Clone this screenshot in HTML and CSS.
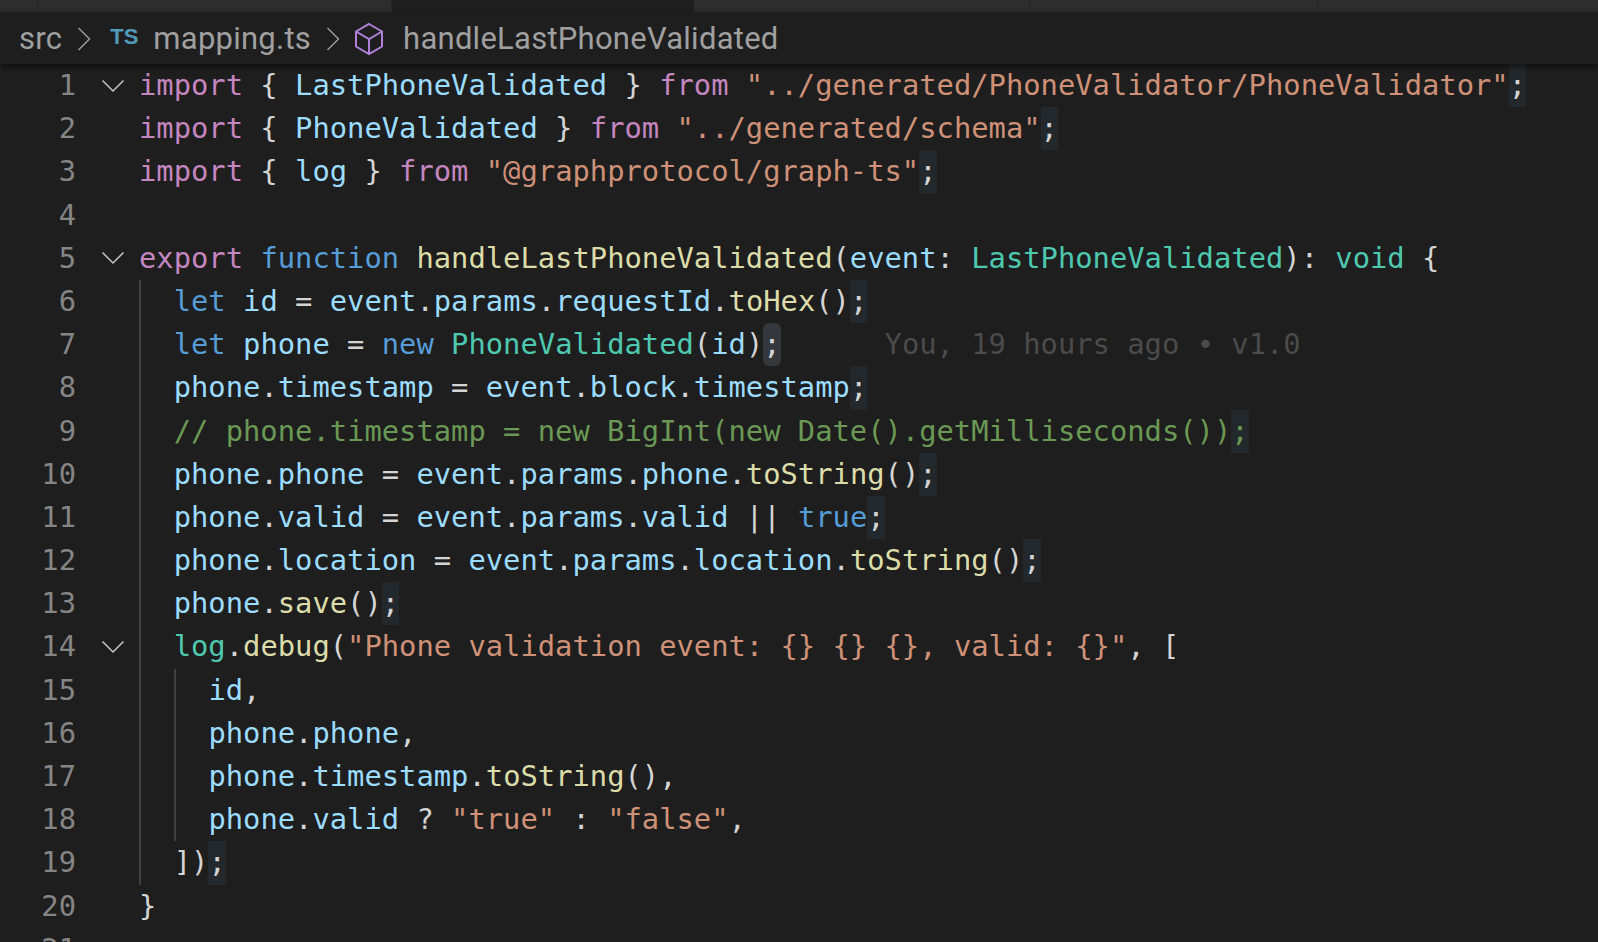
FILE: index.html
```html
<!DOCTYPE html>
<html lang="en">
<head>
<meta charset="utf-8">
<title>mapping.ts</title>
<link rel="stylesheet" href="styles.css">
</head>
<body>
<div class="tabs">
  <div class="tab t0"></div><div class="tab t1"></div><div class="tab active"></div><div class="tab t3"></div><div class="tab t4"></div><div class="tab t5"></div>
</div>
<nav class="crumbs">
  <span>src</span>
  <svg class="sep" width="14" height="26" viewBox="0 0 14 26"><path d="M1.500 2l11 11L1.500 24" fill="none" stroke="#a0a0a0" stroke-width="1.400"/></svg>
  <span class="ts">TS</span>
  <span>mapping.ts</span>
  <svg class="sep" width="14" height="26" viewBox="0 0 14 26"><path d="M1.500 2l11 11L1.500 24" fill="none" stroke="#a0a0a0" stroke-width="1.400"/></svg>
  <svg class="cube" width="30" height="34" viewBox="0 0 30 34"><path d="M15 2 L28 9.500 V24.500 L15 32 L2 24.500 V9.500 Z M2 9.500 L15 17 L28 9.500 M15 17 V32" fill="none" stroke="#b180d7" stroke-width="2"/></svg>
  <span>handleLastPhoneValidated</span>
</nav>
<main class="editor">
  <div class="line"><span class="num">1</span><span class="fold"><svg width="24" height="14" viewBox="0 0 24 14"><path d="M1.500 1.500L12 12L22.500 1.500" fill="none" stroke="#c5c5c5" stroke-width="1.500"/></svg></span><code><i class="k">import</i> { <i class="v">LastPhoneValidated</i> } <i class="k">from</i> <i class="s">"../generated/PhoneValidator/PhoneValidator"</i><b>;</b></code></div>
  <div class="line"><span class="num">2</span><span class="fold"></span><code><i class="k">import</i> { <i class="v">PhoneValidated</i> } <i class="k">from</i> <i class="s">"../generated/schema"</i><b>;</b></code></div>
  <div class="line"><span class="num">3</span><span class="fold"></span><code><i class="k">import</i> { <i class="v">log</i> } <i class="k">from</i> <i class="s">"@graphprotocol/graph-ts"</i><b>;</b></code></div>
  <div class="line"><span class="num">4</span><span class="fold"></span><code></code></div>
  <div class="line"><span class="num">5</span><span class="fold"><svg width="24" height="14" viewBox="0 0 24 14"><path d="M1.500 1.500L12 12L22.500 1.500" fill="none" stroke="#c5c5c5" stroke-width="1.500"/></svg></span><code><i class="k">export</i> <i class="b">function</i> <i class="f">handleLastPhoneValidated</i>(<i class="v">event</i>: <i class="t">LastPhoneValidated</i>): <i class="t">void</i> {</code></div>
  <div class="line"><span class="num">6</span><span class="fold"></span><code><span class="ind"></span><i class="b">let</i> <i class="v">id</i> = <i class="v">event</i>.<i class="v">params</i>.<i class="v">requestId</i>.<i class="f">toHex</i>()<b>;</b></code></div>
  <div class="line"><span class="num">7</span><span class="fold"></span><code><span class="ind"></span><i class="b">let</i> <i class="v">phone</i> = <i class="b">new</i> <i class="t">PhoneValidated</i>(<i class="v">id</i>)<b class="cursor">;</b><span class="blame">You, 19 hours ago • v1.0</span></code></div>
  <div class="line"><span class="num">8</span><span class="fold"></span><code><span class="ind"></span><i class="v">phone</i>.<i class="v">timestamp</i> = <i class="v">event</i>.<i class="v">block</i>.<i class="v">timestamp</i><b>;</b></code></div>
  <div class="line"><span class="num">9</span><span class="fold"></span><code><span class="ind"></span><i class="c">// phone.timestamp = new BigInt(new Date().getMilliseconds())</i><b class="c">;</b></code></div>
  <div class="line"><span class="num">10</span><span class="fold"></span><code><span class="ind"></span><i class="v">phone</i>.<i class="v">phone</i> = <i class="v">event</i>.<i class="v">params</i>.<i class="v">phone</i>.<i class="f">toString</i>()<b>;</b></code></div>
  <div class="line"><span class="num">11</span><span class="fold"></span><code><span class="ind"></span><i class="v">phone</i>.<i class="v">valid</i> = <i class="v">event</i>.<i class="v">params</i>.<i class="v">valid</i> || <i class="b">true</i><b>;</b></code></div>
  <div class="line"><span class="num">12</span><span class="fold"></span><code><span class="ind"></span><i class="v">phone</i>.<i class="v">location</i> = <i class="v">event</i>.<i class="v">params</i>.<i class="v">location</i>.<i class="f">toString</i>()<b>;</b></code></div>
  <div class="line"><span class="num">13</span><span class="fold"></span><code><span class="ind"></span><i class="v">phone</i>.<i class="f">save</i>()<b>;</b></code></div>
  <div class="line"><span class="num">14</span><span class="fold"><svg width="24" height="14" viewBox="0 0 24 14"><path d="M1.500 1.500L12 12L22.500 1.500" fill="none" stroke="#c5c5c5" stroke-width="1.500"/></svg></span><code><span class="ind"></span><i class="t">log</i>.<i class="f">debug</i>(<i class="s">"Phone validation event: {} {} {}, valid: {}"</i>, [</code></div>
  <div class="line"><span class="num">15</span><span class="fold"></span><code><span class="ind"></span><span class="ind"></span><i class="v">id</i>,</code></div>
  <div class="line"><span class="num">16</span><span class="fold"></span><code><span class="ind"></span><span class="ind"></span><i class="v">phone</i>.<i class="v">phone</i>,</code></div>
  <div class="line"><span class="num">17</span><span class="fold"></span><code><span class="ind"></span><span class="ind"></span><i class="v">phone</i>.<i class="v">timestamp</i>.<i class="f">toString</i>(),</code></div>
  <div class="line"><span class="num">18</span><span class="fold"></span><code><span class="ind"></span><span class="ind"></span><i class="v">phone</i>.<i class="v">valid</i> ? <i class="s">"true"</i> : <i class="s">"false"</i>,</code></div>
  <div class="line"><span class="num">19</span><span class="fold"></span><code><span class="ind"></span>])<b>;</b></code></div>
  <div class="line"><span class="num">20</span><span class="fold"></span><code>}</code></div>
  <div class="line"><span class="num">21</span><span class="fold"></span><code></code></div>
</main>
</body>
</html>
```
FILE: styles.css
```css
* { box-sizing: border-box; }
html, body { margin: 0; height: 100%; }
body {
  width: 1598px;
  height: 942px;
  overflow: hidden;
  background: #1e1e1e;
  display: flex;
  flex-direction: column;
}
.tabs {
  height: 12px;
  flex: none;
  display: flex;
  background: #252526;
}
.tab { background: #2d2d2d; border-right: 1px solid #252526; }
.t0 { width: 38px; }
.t1 { width: 354px; }
.tab.active { width: 302px; background: #1e1e1e; border: 0; }
.t3 { width: 336px; }
.t4 { width: 288px; }
.t5 { flex: 1; border: 0; }
.crumbs {
  height: 52px;
  flex: none;
  display: flex;
  align-items: center;
  padding: 1px 0 0 19px;
  font-family: Roboto, "Liberation Sans", sans-serif;
  font-size: 31px;
  letter-spacing: 0.25px;
  color: #a0a0a0;
  background: #1e1e1e;
  box-shadow: 0 3px 6px rgba(0, 0, 0, 0.5);
  position: relative;
}
.sep { margin: 0 19px 0 15px; }
.ts {
  font-family: "Liberation Sans", sans-serif;
  font-size: 22px;
  font-weight: 700;
  letter-spacing: 0;
  color: #519aba;
  margin: -4px 15px 0 0;
}
.cube { margin: 0 19px 0 0; }
.sep + .cube { margin-left: -5px; }
.editor {
  flex: 1;
  overflow: hidden;
  font-family: "DejaVu Sans Mono", monospace;
  font-size: 28.8px;
  color: #d4d4d4;
}
.line {
  display: flex;
  height: 43.2px;
  line-height: 43.2px;
  white-space: pre;
}
.num {
  width: 76px;
  flex: none;
  text-align: right;
  color: #858585;
}
.fold {
  width: 63px;
  flex: none;
  display: flex;
  align-items: center;
  padding-left: 25px;
}
code {
  font: inherit;
  display: block;
  flex: 1;
}
code i { font-style: normal; }
code b {
  display: inline-block;
  height: 43.2px;
  vertical-align: top;
  font-weight: normal;
  background: #23282c;
}
.k { color: #c586c0; }
.s { color: #ce9178; }
.v { color: #9cdcfe; }
.t { color: #4ec9b0; }
.f { color: #dcdcaa; }
.b { color: #569cd6; }
.c { color: #6a9955; }
code b.cursor { background: #34383d; border-radius: 6px; }
.ind {
  display: inline-block;
  width: 34.7px;
  height: 43.2px;
  vertical-align: top;
  border-left: 2px solid #404040;
}
.blame { color: #4b4b4b; margin-left: 104px; }
```
